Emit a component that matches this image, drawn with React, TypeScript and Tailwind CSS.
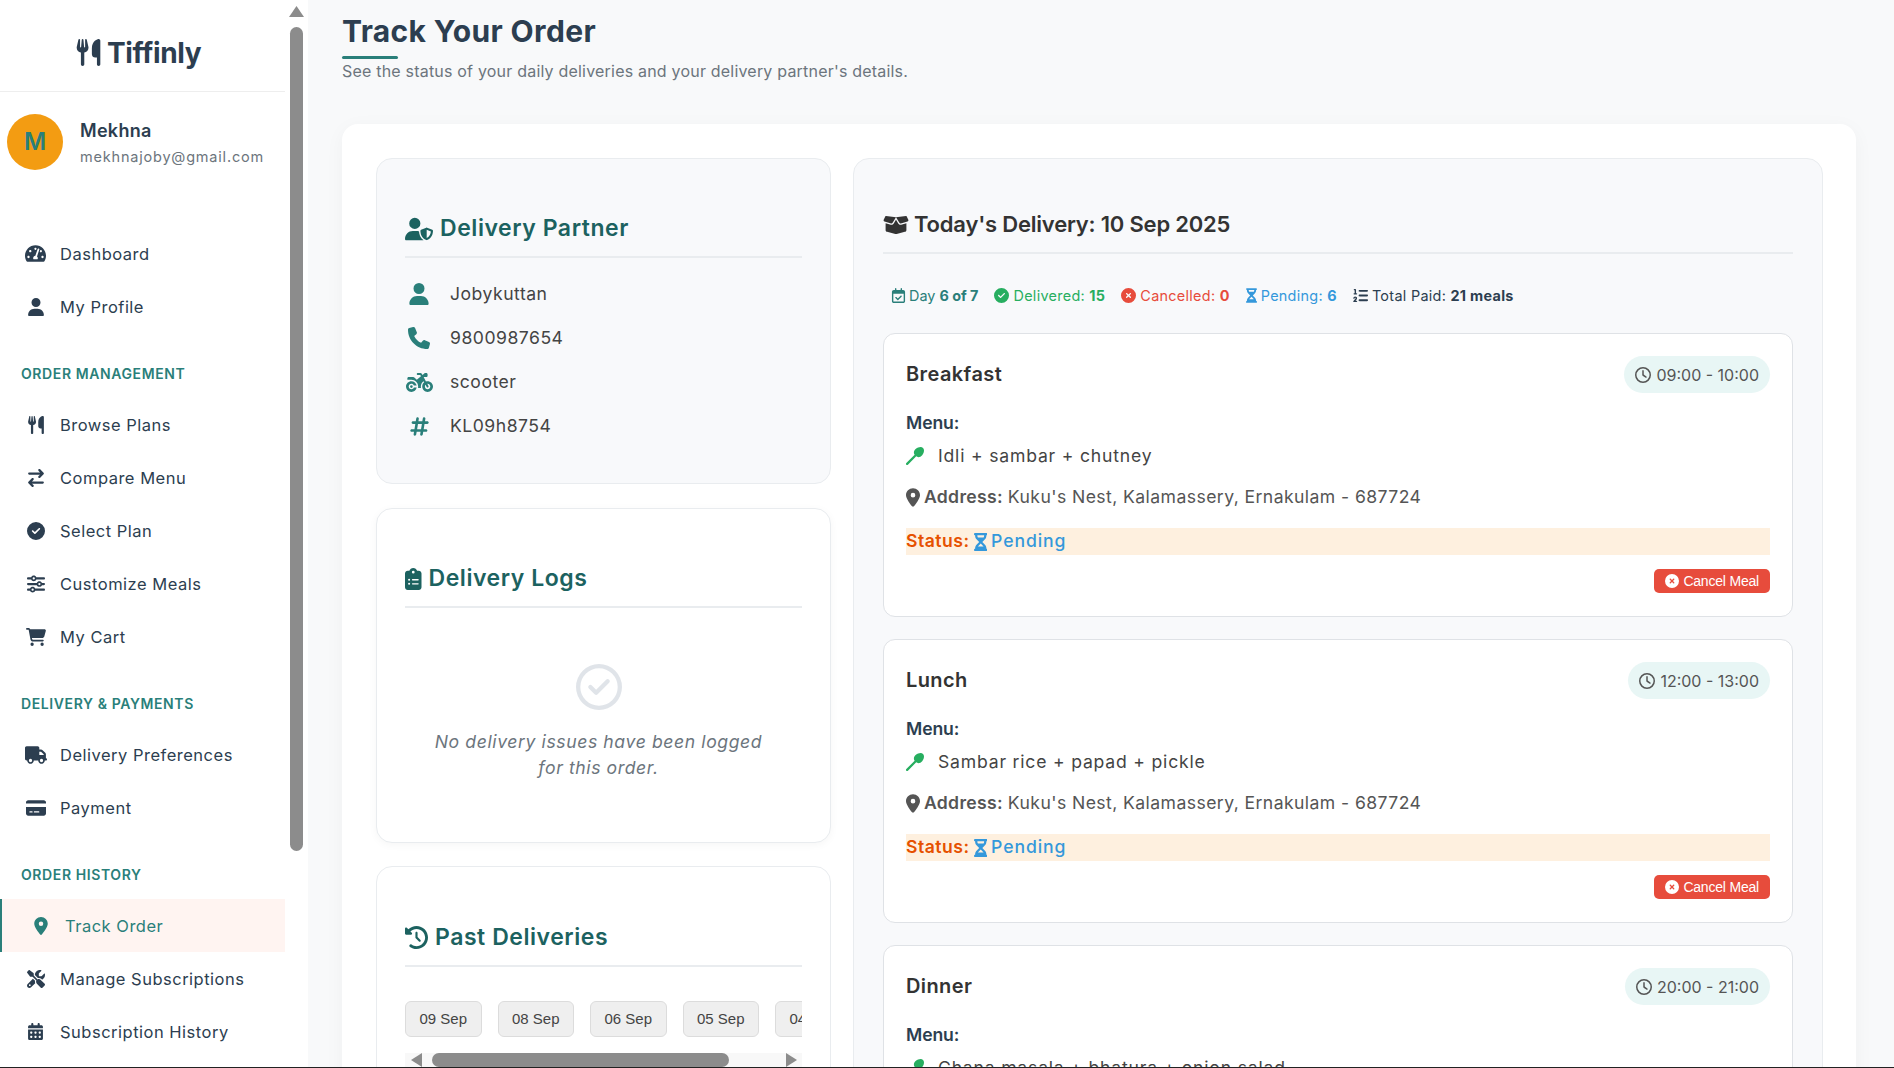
import type { ReactNode } from "react";
import { FaTachometerAlt } from "react-icons/fa";
import {
  FaArrowRightArrowLeft,
  FaBoxOpen,
  FaCalendarDays,
  FaCartShopping,
  FaCircleCheck,
  FaCircleXmark,
  FaClipboardList,
  FaClockRotateLeft,
  FaCreditCard,
  FaHashtag,
  FaHourglassHalf,
  FaListOl,
  FaLocationDot,
  FaMotorcycle,
  FaPhone,
  FaRegCalendarCheck,
  FaRegCircleCheck,
  FaRegClock,
  FaScrewdriverWrench,
  FaSliders,
  FaSpoon,
  FaTruck,
  FaUser,
  FaUserShield,
  FaUtensils,
} from "react-icons/fa6";

const navSections = [
  {
    title: "",
    items: [
      { label: "Dashboard", icon: <FaTachometerAlt size={21} /> },
      { label: "My Profile", icon: <FaUser size={18} /> },
    ],
  },
  {
    title: "ORDER MANAGEMENT",
    items: [
      { label: "Browse Plans", icon: <FaUtensils size={18} /> },
      { label: "Compare Menu", icon: <FaArrowRightArrowLeft size={18} /> },
      { label: "Select Plan", icon: <FaCircleCheck size={18} /> },
      { label: "Customize Meals", icon: <FaSliders size={18} /> },
      { label: "My Cart", icon: <FaCartShopping size={20} /> },
    ],
  },
  {
    title: "DELIVERY & PAYMENTS",
    items: [
      { label: "Delivery Preferences", icon: <FaTruck size={22} /> },
      { label: "Payment", icon: <FaCreditCard size={20} /> },
    ],
  },
  {
    title: "ORDER HISTORY",
    items: [
      { label: "Track Order", icon: <FaLocationDot size={18} />, active: true },
      { label: "Manage Subscriptions", icon: <FaScrewdriverWrench size={18} /> },
      { label: "Subscription History", icon: <FaCalendarDays size={17} /> },
    ],
  },
];

const partnerRows = [
  { icon: <FaUser size={22} />, text: "Jobykuttan" },
  { icon: <FaPhone size={22} />, text: "9800987654" },
  { icon: <FaMotorcycle size={27} />, text: "scooter" },
  { icon: <FaHashtag size={21} />, text: "KL09h8754" },
];

const meals = [
  { name: "Breakfast", time: "09:00 - 10:00", menu: "Idli + sambar + chutney" },
  { name: "Lunch", time: "12:00 - 13:00", menu: "Sambar rice + papad + pickle" },
  { name: "Dinner", time: "20:00 - 21:00", menu: "Chana masala + bhatura + onion salad" },
];

const pastDates = ["09 Sep", "08 Sep", "06 Sep", "05 Sep", "04 Sep"];

function Sidebar() {
  return (
    <aside className="flex w-[308px] shrink-0 bg-white">
      <div className="w-[285px] shrink-0 overflow-hidden">
        <div className="flex h-[92px] items-center justify-center gap-[5px] border-b border-[#eeeeee] pr-[9px] pt-[14px] text-[#2c3e50]">
          <FaUtensils size={27} />
          <span className="text-[28px] font-bold tracking-[-0.4px]">Tiffinly</span>
        </div>
        <div className="flex items-center gap-[17px] pl-[7px] pt-[22px]">
          <div className="flex h-[56px] w-[56px] items-center justify-center rounded-full bg-[#f39c12] text-[24px] font-semibold text-[#2a7f7a]">
            M
          </div>
          <div className="pt-[3px]">
            <div className="text-[18px] font-semibold leading-[24px] tracking-[0.3px] text-[#2c3e50]">Mekhna</div>
            <div className="mt-[3px] text-[14.5px] leading-[22px] tracking-[0.8px] text-[#6c757d]">
              mekhnajoby@gmail.com
            </div>
          </div>
        </div>
        <nav className="mt-[57px]">
          {navSections.map((section) => (
            <div key={section.title}>
              {section.title && (
                <div className="pb-[14px] pl-[21px] pt-[30px] text-[14px] font-semibold leading-[21px] tracking-[0.6px] text-[#2a7f7a]">
                  {section.title}
                </div>
              )}
              {section.items.map((item) =>
                item.active ? (
                  <div
                    key={item.label}
                    className="flex h-[53px] items-center border-l-2 border-[#2a7f7a] bg-[#fff4f1] pl-[25px] text-[#2a7f7a]"
                  >
                    <span className="flex w-[27px] justify-center">{item.icon}</span>
                    <span className="ml-[11px] pt-[2px] text-[16.5px] tracking-[0.5px]">{item.label}</span>
                  </div>
                ) : (
                  <div key={item.label} className="flex h-[53px] items-center pl-[22px] text-[#2c3e50]">
                    <span className="flex w-[27px] justify-center">{item.icon}</span>
                    <span className="ml-[11px] pt-[2px] text-[16.5px] tracking-[0.5px]">{item.label}</span>
                  </div>
                )
              )}
            </div>
          ))}
        </nav>
      </div>
      {/* scrollbar */}
      <div className="flex w-[23px] flex-col items-center pt-[6px]">
        <svg width="15" height="11" viewBox="0 0 15 11">
          <polygon points="7.5,0 15,11 0,11" fill="#8c8c8c" />
        </svg>
        <div className="mt-[10px] h-[824px] w-[13px] rounded-full bg-[#8c8c8c]" />
      </div>
    </aside>
  );
}

function SectionTitle({ icon, children }: { icon: ReactNode; children: ReactNode }) {
  return (
    <div className="flex h-[49px] items-center gap-[7px] border-b-2 border-[#e9ecef] pb-[8px] text-[#1c6260]">
      {icon}
      <h3 className="text-[23px] font-semibold tracking-[0.55px]">{children}</h3>
    </div>
  );
}

function PartnerCard() {
  return (
    <section className="h-[326px] rounded-2xl border border-[#e9ecef] bg-[#f8f9fb] px-[28px] pt-[50px]">
      <SectionTitle icon={<FaUserShield size={28} />}>Delivery Partner</SectionTitle>
      <div className="mt-[14px]">
        {partnerRows.map((row) => (
          <div key={row.text} className="flex h-[44px] items-center text-[#444444]">
            <span className="flex w-[28px] justify-center text-[#2a7f7a]">{row.icon}</span>
            <span className="ml-[17px] text-[17.6px] tracking-[0.5px]">{row.text}</span>
          </div>
        ))}
      </div>
    </section>
  );
}

function LogsCard() {
  return (
    <section className="mt-[24px] h-[335px] rounded-2xl border border-[#e9ecef] bg-white px-[28px] pt-[50px] shadow-[0_2px_8px_rgba(0,0,0,0.04)]">
      <SectionTitle icon={<FaClipboardList size={22} className="w-[16.5px]" />}>Delivery Logs</SectionTitle>
      <div className="flex flex-col items-center pr-[10px]">
        <FaRegCircleCheck size={46} className="mt-[56px] text-[#e0e4e9]" />
        <p className="mt-[19px] text-center text-[17.6px] italic leading-[26.4px] tracking-[0.6px] text-[#6c757d]">
          No delivery issues have been logged
          <br />
          for this order.
        </p>
      </div>
    </section>
  );
}

function PastCard() {
  return (
    <section className="mt-[23px] rounded-2xl border border-[#e9ecef] bg-white px-[28px] pb-[40px] pt-[51px]">
      <SectionTitle icon={<FaClockRotateLeft size={23} />}>Past Deliveries</SectionTitle>
      <div className="mt-[34px] flex gap-[16px] overflow-hidden font-['Liberation_Sans',sans-serif]">
        {pastDates.map((date) => (
          <button
            key={date}
            className="h-[36px] w-[76.5px] shrink-0 rounded-[6px] border border-[#dcdcdc] bg-[#efefef] text-[15px] text-[#444444]"
          >
            {date}
          </button>
        ))}
      </div>
      <div className="mt-[16px] flex h-[14px] items-center bg-[#f8f8f8]">
        <svg width="11" height="14" viewBox="0 0 11 14" className="ml-[6px] shrink-0">
          <polygon points="0,7 11,0 11,14" fill="#8c8c8c" />
        </svg>
        <div className="ml-[10px] h-[14px] w-[297px] rounded-full bg-[#8c8c8c]" />
        <svg width="11" height="14" viewBox="0 0 11 14" className="ml-[57px] shrink-0">
          <polygon points="11,7 0,0 0,14" fill="#8c8c8c" />
        </svg>
      </div>
    </section>
  );
}

function StatsRow() {
  return (
    <div className="mb-[25px] ml-[8px] mt-[30px] flex h-[24px] items-center gap-[16px] text-[14.4px] tracking-[0.3px]">
      <span className="flex items-center gap-[3px] tracking-normal text-[#2a7f7a]">
        <FaRegCalendarCheck size={15} />
        <span>
          Day <b className="font-bold">6 of 7</b>
        </span>
      </span>
      <span className="flex items-center gap-[4px] text-[#27ae60]">
        <FaCircleCheck size={15} />
        <span>
          Delivered: <b className="font-bold">15</b>
        </span>
      </span>
      <span className="flex items-center gap-[4px] text-[#e74c3c]">
        <FaCircleXmark size={15} />
        <span>
          Cancelled: <b className="font-bold">0</b>
        </span>
      </span>
      <span className="flex items-center gap-[4px] text-[#3498db]">
        <FaHourglassHalf size={15} className="w-[11px]" />
        <span>
          Pending: <b className="font-bold">6</b>
        </span>
      </span>
      <span className="flex items-center gap-[4px] text-[#2c3e50]">
        <FaListOl size={15} />
        <span>
          Total Paid: <b className="font-bold">21 meals</b>
        </span>
      </span>
    </div>
  );
}

function MealCard({ meal }: { meal: (typeof meals)[number] }) {
  return (
    <div className="mb-[22px] h-[284px] shrink-0 rounded-xl border border-[#dfe2e6] bg-white px-[22px] pt-[22px]">
      <div className="flex items-center justify-between">
        <h4 className="pb-[2px] text-[20px] font-semibold tracking-[0.4px] text-[#333333]">{meal.name}</h4>
        <span className="flex h-[37px] items-center gap-[5px] rounded-full bg-[#e8f6f5] px-[11px] text-[16px] text-[#555555]">
          <FaRegClock size={16} />
          {meal.time}
        </span>
      </div>
      <div className="mt-[17px] text-[17.6px] font-semibold leading-[26px] tracking-[-0.1px] text-[#2c3e50]">Menu:</div>
      <div className="mt-[6px] flex h-[28px] items-center text-[17.6px] tracking-[0.8px] text-[#444444]">
        <FaSpoon size={18} className="text-[#27ae60]" />
        <span className="ml-[14px]">{meal.menu}</span>
      </div>
      <div className="mt-[13px] flex h-[28px] items-center text-[17.6px] tracking-[0.42px] text-[#555555]">
        <FaLocationDot size={19} className="w-[14px]" />
        <b className="ml-[4px] font-semibold tracking-[0.3px]">Address:</b>
        <span className="ml-[5px]">Kuku's Nest, Kalamassery, Ernakulam - 687724</span>
      </div>
      <div className="mt-[17px] flex h-[27px] items-center bg-[#fef0df] text-[17.6px] font-semibold tracking-[0.5px]">
        <span className="text-[#e65100]">Status:</span>
        <FaHourglassHalf size={18} className="ml-[4px] w-[13.5px] text-[#3498db]" />
        <span className="ml-[4px] font-medium tracking-[0.9px] text-[#3498db]">Pending</span>
      </div>
      <div className="mt-[14px] flex justify-end">
        <button className="flex h-[24px] items-center gap-[4px] rounded-[5px] bg-[#e74c3c] px-[11px] font-['Liberation_Sans',sans-serif] text-[14px] tracking-[-0.2px] text-white">
          <FaCircleXmark size={14} />
          Cancel Meal
        </button>
      </div>
    </div>
  );
}

function TodayCard() {
  return (
    <section className="h-[1000px] flex-1 rounded-2xl border border-[#e9ecef] bg-[#f8f9fb] px-[29px] pt-[46px]">
      <div className="flex h-[49px] items-center gap-[5px] border-b-2 border-[#e9ecef] pb-[8px] text-[#333333]">
        <FaBoxOpen size={26} />
        <h3 className="text-[22px] font-semibold tracking-[-0.2px]">Today's Delivery: 10 Sep 2025</h3>
      </div>
      <StatsRow />
      {meals.map((meal) => (
        <MealCard key={meal.name} meal={meal} />
      ))}
    </section>
  );
}

export default function App() {
  return (
    <div className="flex h-screen flex-col overflow-hidden font-['Inter',sans-serif]">
      <div className="flex min-h-0 flex-1">
        <Sidebar />
        <main className="min-w-0 flex-1 overflow-hidden bg-[#f8f9fa] pl-[34px] pr-[38px]">
          <h1 className="mt-[13px] text-[30px] font-bold leading-[36px] tracking-[0.35px] text-[#2c3e50]">
            Track Your Order
          </h1>
          <div className="mt-[7px] h-[3px] w-[56px] rounded-full bg-[#2a7f7a]" />
          <p className="text-[16px] leading-[24px] tracking-[0.2px] text-[#6c757d]">
            See the status of your daily deliveries and your delivery partner's details.
          </p>
          <div className="mt-[41px] flex h-[1000px] gap-[22px] rounded-2xl bg-white pl-[34px] pr-[33px] pt-[34px] shadow-[0_4px_20px_rgba(0,0,0,0.04)]">
            <div className="w-[455px] shrink-0">
              <PartnerCard />
              <LogsCard />
              <PastCard />
            </div>
            <TodayCard />
          </div>
        </main>
      </div>
      <div className="h-px shrink-0 bg-[#222222]" />
    </div>
  );
}
